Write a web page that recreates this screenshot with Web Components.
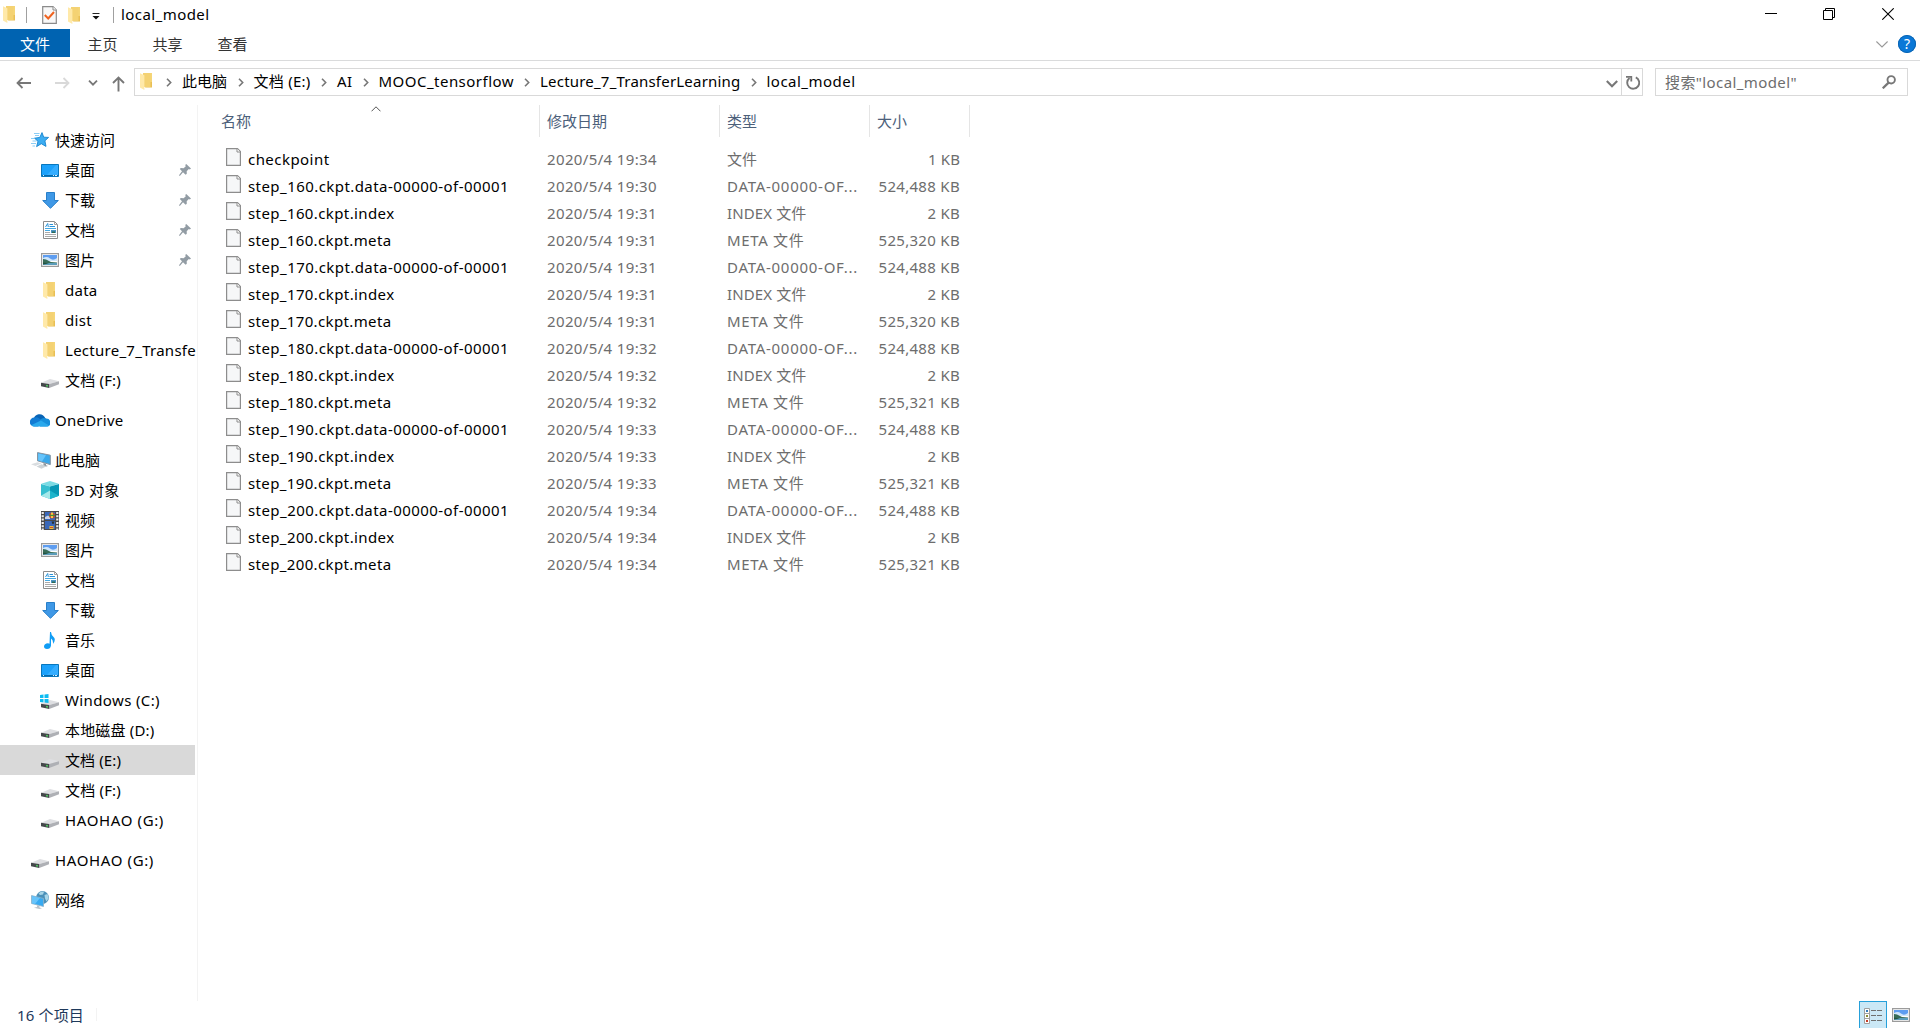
<!DOCTYPE html>
<html lang="zh-CN">
<head>
<meta charset="utf-8">
<title>local_model</title>
<style>
html,body{margin:0;height:100%;overflow:hidden;background:#fff}
body{font:15px/20px "Noto Sans","Noto Sans CJK SC",sans-serif;color:#000}
</style>
</head>
<body>
<explorer-window></explorer-window>
<script>
const DRIVE='<path d="M.2 3.800L9 0 18 2.300 8.200 5z" fill="#dedfe2"/><path d="M8.200 5L18 2.300V5.300L8.200 9z" fill="#aeb0b5"/><path d="M0 3.800L8.200 5V9L0 7.200z" fill="#45484b"/><path d="M5.200 6.600l1.600.3" stroke="#50dd64" stroke-width="1.500"/>';
const ICONS = {
folder:[12,17,'<path d="M3 0H12V12H3z" fill="#f5d678"/><path d="M8.5 9H12V14.5H5z" fill="#e9bf55"/><path d="M3 0H10.5V14H3z" fill="#f4d273"/><path d="M0 .3L4.4 2.3V17L0 14.6z" fill="#ffe9a9"/>'],
checkdoc:[15,18,'<path d="M.7 .7H11L14.3 4V17.3H.7z" fill="#f8f8f8" stroke="#8b8b8b" stroke-width="1.2"/><path d="M11 .7V4h3.3" fill="#fff" stroke="#8b8b8b"/><path d="M2.8 9l3.4 3.5L12 6" fill="none" stroke="#ef6320" stroke-width="2"/>'],
caret:[8,7,'<path d="M.5 .5H7.5" stroke="#222"/><path d="M.5 3H7.5L4 6.5z" fill="#111"/>'],
back:[15,12,'<path d="M15 6H1.5M6.5 1L1.5 6l5 5" fill="none" stroke="#777" stroke-width="1.8"/>'],
forward:[15,12,'<path d="M0 6H13.5M8.5 1l5 5-5 5" fill="none" stroke="#d9d9d9" stroke-width="1.8"/>'],
down:[10,6,'<path d="M1 .7l4 4 4-4" fill="none" stroke="#777" stroke-width="1.8"/>'],
down2:[12,8,'<path d="M.8 1l5.2 5.2L11.2 1" fill="none" stroke="#777" stroke-width="2.1"/>'],
thindown:[12,7,'<path d="M.4 .5L6 6 11.6 .5" fill="none" stroke="#999" stroke-width="1.1"/>'],
up:[13,16,'<path d="M6.5 15.5V1.5M1 7l5.500-5.500L12 7" fill="none" stroke="#777" stroke-width="1.9"/>'],
chev:[6,9,'<path d="M1 .7l3.700 3.800L1 8.300" fill="none" stroke="#777" stroke-width="1.6"/>'],
sort:[10,6,'<path d="M.5 5.300L5 .8l4.500 4.500" fill="none" stroke="#555"/>'],
refresh:[14,15,'<path d="M9.800 2.300A6 6 0 1 1 3.500 3" fill="none" stroke="#777" stroke-width="1.9"/><path d="M0 1.800H5.300V6.500" fill="none" stroke="#777" stroke-width="1.800"/>'],
search:[14,14,'<circle cx="9.200" cy="4.800" r="3.700" fill="none" stroke="#777" stroke-width="1.900"/><path d="M6.600 7.600L.7 13.300" stroke="#777" stroke-width="2.300"/>'],
min:[12,12,'<path d="M0 5.500H12" stroke="#000"/>'],
restore:[12,12,'<path d="M.5 2.500H9.500V11.500H.5zM2.500 2.500V.5H11.500V9.500H9.500" fill="none" stroke="#000"/>'],
close:[12,12,'<path d="M.3 .3L11.700 11.700M11.700 .3L.3 11.700" stroke="#000" stroke-width="1.100"/>'],
star:[18,16,'<path d="M11 .6L12.700 5.200 17.600 5.400 13.900 8.800 15 14.400 10.300 11.700 5.600 14.600 7 9.400 3.600 6.200 8.800 5.400z" fill="#3cadf2" stroke="#1583cf" stroke-width=".9"/><path d="M3 1.500H8.500M4 3.500H8M0 6.500H4M1.500 9H5.500M0 11.500H5M1.500 14H4" stroke="#6cc0f2" stroke-width=".8"/>'],
desktop:[18,13,'<path d="M.5 .5H17.500V12.500H.5z" fill="#1ba1fb" stroke="#0877bd"/><path d="M6 11L15 1h2v10z" fill="#35adff"/><path d="M1 11.500H17" stroke="#0568aa"/><path d="M2 11.500H3M12 11.500h1m1 0h2" stroke="#d8f0ff"/>'],
download:[17,17,'<path d="M4.500 .5H12.500V8.500H16.300L8.500 16.300.7 8.500H4.500z" fill="#3f98e6" stroke="#287fc9"/>'],
doc:[15,18,'<path d="M.5 .5H11.500L14.500 3.500V17.500H.5z" fill="#fff" stroke="#8c8c8c"/><path d="M11.500 1V3.500H14" fill="none" stroke="#8c8c8c" stroke-width=".8"/><path d="M2.500 6L4.700 2.500l.6 3.500M6.500 3.500H10M6.500 5.500H12" fill="none" stroke="#2b93d8"/><path d="M2 7.500H13M2 9.500H7" stroke="#2f9fe0" stroke-width=".9"/><path d="M8 9H13V12H8z" fill="#4b93c4"/><path d="M9 10.500h3v1.500H9z" fill="#2c6a54"/><path d="M2 11.500H7M2 13.500H13M2 15.500H13" stroke="#a0a0a0" stroke-width=".9"/>'],
picture:[18,14,'<path d="M.6 .6H17.400V13.400H.6z" fill="#fff" stroke="#9b9b9b" stroke-width="1.200"/><path d="M2 2H16V7H2z" fill="#5e9df0"/><path d="M2 5Q6 3 9 5.500T16 5V8H2z" fill="#cfe6fb"/><path d="M2 6L5 6.500 10 9 16 9.500V10.500H2z" fill="#376c58"/><path d="M2 10H16V12H2z" fill="#5b9dbb"/><path d="M2 9.500L8 10.500 2 11.500z" fill="#24533f"/>'],
drive:[18,9,DRIVE],
windrive:[19,15,'<g transform="translate(1 6)">'+DRIVE+'</g><path d="M0 1L3.500 .5V4H0zM4.500 .4L8.500 0V4H4.500zM0 5H3.500V8.500L0 8zM4.500 5H8.500V9L4.500 8.500z" fill="#0cbcf2"/>'],
onedrive:[20,14,'<path d="M4 5A6 6 0 0 1 14 3.200L16 6 9 9 2 6z" fill="#0864b6"/><path d="M4.500 4.600Q7 3.800 9 5.200L14.500 9 8 13.500H4A4.200 4.200 0 0 1 4.500 4.600" fill="#127bd3"/><path d="M10 7Q13 3.800 16 5.500A4.200 4.200 0 0 1 18 13.500H10z" fill="#168edb"/><path d="M1.500 12L11 7.600 19 12.500Q18 13.500 16 13.500H4Q2.500 13.500 1.500 12" fill="#29a8ec"/>'],
pc:[20,17,'<path d="M6.500 .6L19.300 3.200V12.600L6.500 8.800z" fill="#3aa8ea" stroke="#8593a0"/><path d="M7.200 1.500L15 3.200 11 9.400 7.200 8.300z" fill="#66c4fb"/><path d="M12.500 11l2.500.7v1.600l2 .7-2 .6-4.500-1.200 2-.6z" fill="#8e989f"/><path d="M0 12.300L6.500 10.300 10.500 11.600 4.500 13.900z" fill="#d9dde0"/><path d="M5.500 14.500L10.500 12.300 15.500 14.300 10.500 16.800z" fill="#cdd3d7"/>'],
cube:[18,18,'<path d="M9 0L17.800 2.800 9 5.400.2 2.800z" fill="#7adbe4"/><path d="M0 3L9 5.400V18L0 14.800z" fill="#36bfd0"/><path d="M18 3L9 5.400V18L18 14.800z" fill="#0798b5"/><path d="M9 9.500L0 14.800 9 18z" fill="#a5e8e9"/><path d="M9 9.500L18 14.800 9 18z" fill="#1db4cb"/>'],
video:[18,19,'<path d="M0 0H18V19H0z" fill="#4a4a4a"/><path d="M4 1H14V9H4zM4 10H14V18H4z" fill="#3a68b8"/><path d="M4 6l3-1.500 2 1.500v2H4z" fill="#c5d3ea"/><circle cx="11" cy="4.500" r="3" fill="#c94a38"/><path d="M10 1.500h2v5.500h-2z" fill="#f4cc3f"/><path d="M8 3.800h6v1.200H8z" fill="#3f8f3c"/><path d="M10.500 10.500h3l-1 2.500h-1z" fill="#27302f"/><path d="M8.500 15h4v3h-4z" fill="#edbf32"/><path d="M9 16h3v1H9z" fill="#c94a38"/><path d="M1.700 1V19M16.300 1V19" stroke="#efefef" stroke-width="2.200" stroke-dasharray="2 1.300"/>'],
music:[11,17,'<path d="M6 0H7Q7 3 10 5.500 12 8 9 12 9.500 8 7 6.500V13.500Q6.500 17 3 17 0 16.800 0 14.400 .3 11.500 4 11.300L5.500 11.700z" fill="#109df5"/>'],
network:[18,18,'<circle cx="11.500" cy="6.500" r="6.400" fill="#4b90b8"/><path d="M7.500 2.500Q10 0 13 .8L12 3.500 9 4zM13.500 4l3-1 1.200 4-2.200 3.500-1.500-3z" fill="#a9d6e8"/><path d="M.5 4.500L12.500 7.500V15.500L.5 12.500z" fill="#37aaf2" stroke="#8fb2c8" stroke-width=".8"/><path d="M1 5L9 7 4 13 1 12.200z" fill="#68c4fa"/><path d="M6 14.300l2.500.7v1.500l2.500.7-2.500.8-5.500-1.300 3-.6z" fill="#bbc3c9"/>'],
pin:[12,12,'<path d="M7.200 0L12 4.500 10.800 5.400 9.800 5 7.700 7.300 7.800 9.800 6.600 10.700 4 8.200 .8 12 0 11.200 3 7.200.8 5 1.800 4 4.600 4.200 6.800 2.200 6.200 1z" fill="#929ca4"/>'],
file:[15,18,'<path d="M.6 .6H11.500L14.400 3.500V17.400H.6z" fill="#f6f7f8" stroke="#8d8d8d" stroke-width="1.200"/><path d="M11 .8V4h3.200" fill="#fff" stroke="#8d8d8d"/>'],
details:[18,16,'<path d="M.5 .5H5.500V15.500H.5zM.5 5.500H5.500M.5 10.500H5.500" fill="#fff" stroke="#a1a1a1"/><path d="M2 2h2v2H2z" fill="#347abb"/><path d="M2 7h2v2H2z" fill="#8a8e35"/><path d="M2 12h2v2H2z" fill="#c63b25"/><path d="M7 2.500h5m1 0h5M7 7.500h5m1 0h5M7 12.500h5m1 0h5" stroke="#6f6f6f"/>']
};

/* Inline SVG glyph drawn at its natural pixel size. */
class GlyphIcon extends HTMLElement{
  connectedCallback(){
    if(this.shadowRoot)return;
    const [w,h,s]=ICONS[this.getAttribute('name')];
    this.attachShadow({mode:'open'}).innerHTML=`<style>:host{display:block;flex:none;width:${w}px;height:${h}px}svg{display:block}</style><svg width="${w}" height="${h}" viewBox="0 0 ${w} ${h}">${s}</svg>`;
  }
}
/* One-line label; letter spacing is set so the text fills the width in "w". */
class FitLabel extends HTMLElement{
  connectedCallback(){
    if(!this.shadowRoot)this.attachShadow({mode:'open'}).innerHTML='<style>:host{display:block;flex:none;white-space:nowrap}span{display:inline-block}</style><span><slot></slot></span>';
    const w=+this.getAttribute('w');
    if(!w)return;
    this.style.width=w+'px';
    const s=this.shadowRoot.querySelector('span');
    s.style.letterSpacing='0';
    s.style.letterSpacing=(w-s.getBoundingClientRect().width)/[...this.textContent].length+'px';
  }
}
const define=(tag,html)=>{
  const t=document.createElement('template');t.innerHTML=html;
  customElements.define(tag,class extends HTMLElement{
    connectedCallback(){if(!this.shadowRoot)this.attachShadow({mode:'open'}).append(t.content.cloneNode(true));}
  });
};
customElements.define('glyph-icon',GlyphIcon);
customElements.define('fit-label',FitLabel);

define('title-bar',`<style>
:host{display:flex;height:29px;align-items:flex-start}
i{width:1px;height:16px;background:#a0a0a0;margin-top:7px}
fit-label{margin:4px 0 0 7px}
.sp{flex:1}
</style>
<glyph-icon name="folder" style="margin:6px 11px 0 3px"></glyph-icon><i></i>
<glyph-icon name="checkdoc" style="margin:6px 11px 0 15px"></glyph-icon>
<glyph-icon name="folder" style="margin:7px 12px 0 0"></glyph-icon>
<glyph-icon name="caret" style="margin:13px 13px 0 0"></glyph-icon><i></i>
<fit-label w="88.500">local_model</fit-label><span class="sp"></span>
<glyph-icon name="min" style="margin:8px 46px 0 0"></glyph-icon>
<glyph-icon name="restore" style="margin:8px 47px 0 0"></glyph-icon>
<glyph-icon name="close" style="margin:8px 26px 0 0"></glyph-icon>`);

define('ribbon-tabs',`<style>
:host{display:flex;height:31px;border-bottom:1px solid #dadbdc;color:#333;align-items:flex-start}
b{font-weight:400;height:28px;line-height:31px;width:65px;text-align:center}
b.file{background:#0063b1;color:#fff;width:70px;line-height:30px}
.sp{flex:1}
.help{width:18px;height:18px;border-radius:50%;background:#0a78d7;color:#fff;text-align:center;line-height:18px;font-size:14px;margin:6px 4px 0 10px;box-shadow:inset 0 0 0 1px #0b65b3}
</style>
<b class="file">文件</b><b>主页</b><b>共享</b><b>查看</b><span class="sp"></span>
<glyph-icon name="thindown" style="margin-top:12px"></glyph-icon><span class="help">?</span>`);

define('address-bar',`<style>
:host{display:flex;height:44px;align-items:flex-start}
.box{box-sizing:border-box;height:28px;border:1px solid #d9d9d9;margin-top:7px;display:flex;align-items:center}
.path{width:1509px}
.search{width:253px;margin-left:12px;color:#6d6d6d}
.crumb{display:flex;align-items:center;height:26px}
.crumb glyph-icon{margin:0 10px 0 10px}
.crumb fit-label{margin-top:-2px}
.sp{flex:1}
.re{align-self:stretch;border-left:1px solid #d9d9d9;width:20px;display:flex;align-items:center;justify-content:flex-end}
</style>
<glyph-icon name="back" style="margin:16px 0 0 16px"></glyph-icon>
<glyph-icon name="forward" style="margin:16px 0 0 24px"></glyph-icon>
<glyph-icon name="down" style="margin:19px 0 0 17.500px"></glyph-icon>
<glyph-icon name="up" style="margin:15px 9.500px 0 14px"></glyph-icon>
<div class="box path">
<glyph-icon name="folder" style="margin:-2px 4px 0 5px"></glyph-icon>
<div class="crumb"><glyph-icon name="chev"></glyph-icon><fit-label w="45">此电脑</fit-label></div>
<div class="crumb"><glyph-icon name="chev" style="margin-left:10.500px"></glyph-icon><fit-label w="57">文档 (E:)</fit-label></div>
<div class="crumb"><glyph-icon name="chev" style="margin-left:10.500px"></glyph-icon><fit-label w="15.500">AI</fit-label></div>
<div class="crumb"><glyph-icon name="chev"></glyph-icon><fit-label w="135.500">MOOC_tensorflow</fit-label></div>
<div class="crumb"><glyph-icon name="chev"></glyph-icon><fit-label w="200.500">Lecture_7_TransferLearning</fit-label></div>
<div class="crumb"><glyph-icon name="chev"></glyph-icon><fit-label w="89">local_model</fit-label></div>
<span class="sp"></span><glyph-icon name="down2" style="margin:3px 3px 0 0"></glyph-icon>
<div class="re"><glyph-icon name="refresh"></glyph-icon><span style="width:2px"></span></div></div>
<div class="box search"><fit-label w="132" style="margin-left:9px">搜索"local_model"</fit-label><span class="sp"></span><glyph-icon name="search" style="margin-right:11px"></glyph-icon></div>`);

/* Navigation tree row: attributes icon, w (label width), root, pinned, active. */
customElements.define('nav-row',class extends HTMLElement{
  connectedCallback(){
    if(this.shadowRoot)return;
    const ic=this.getAttribute('icon'),root=this.hasAttribute('root');
    const low=ic==='drive'?6:ic==='windrive'?2:0;
    const shift={folder:-2,pc:1,music:-1,windrive:-1}[ic]||0;
    this.attachShadow({mode:'open'}).innerHTML=`<style>
:host{display:flex;align-items:center;height:30px;width:195px;box-sizing:border-box;padding-left:${root?29:39}px}
:host([gap]){margin-top:10px}
:host([active]){background:#d9d9d9}
.ic{flex:none;width:22px;display:flex;justify-content:center;padding-top:${low}px}
.ic glyph-icon{margin-left:${shift}px}
.t{margin-left:4px}
glyph-icon.pin{margin-left:auto;margin-right:4px}
</style><span class="ic"><glyph-icon name="${ic}"></glyph-icon></span><fit-label class="t" w="${this.getAttribute('w')}">${this.textContent}</fit-label>${this.hasAttribute('pinned')?'<glyph-icon class="pin" name="pin"></glyph-icon>':''}`;
  }
});
define('nav-pane',`<style>:host{display:block;flex:none;box-sizing:border-box;width:198px;height:896px;border-right:1px solid #f3f3f3;padding-top:20px}</style>
<nav-row root icon="star" w="60">快速访问</nav-row>
<nav-row icon="desktop" w="30" pinned>桌面</nav-row>
<nav-row icon="download" w="30" pinned>下载</nav-row>
<nav-row icon="doc" w="30" pinned>文档</nav-row>
<nav-row icon="picture" w="30" pinned>图片</nav-row>
<nav-row icon="folder" w="32.500">data</nav-row>
<nav-row icon="folder" w="27">dist</nav-row>
<nav-row icon="folder" w="131">Lecture_7_Transfe</nav-row>
<nav-row icon="drive" w="56">文档 (F:)</nav-row>
<nav-row root gap icon="onedrive" w="68.500">OneDrive</nav-row>
<nav-row root gap icon="pc" w="45">此电脑</nav-row>
<nav-row icon="cube" w="54.500">3D 对象</nav-row>
<nav-row icon="video" w="30">视频</nav-row>
<nav-row icon="picture" w="30">图片</nav-row>
<nav-row icon="doc" w="30">文档</nav-row>
<nav-row icon="download" w="30">下载</nav-row>
<nav-row icon="music" w="30">音乐</nav-row>
<nav-row icon="desktop" w="30">桌面</nav-row>
<nav-row icon="windrive" w="95">Windows (C:)</nav-row>
<nav-row icon="drive" w="89.500">本地磁盘 (D:)</nav-row>
<nav-row icon="drive" w="56" active>文档 (E:)</nav-row>
<nav-row icon="drive" w="56">文档 (F:)</nav-row>
<nav-row icon="drive" w="99">HAOHAO (G:)</nav-row>
<nav-row root gap icon="drive" w="99">HAOHAO (G:)</nav-row>
<nav-row root gap icon="network" w="30">网络</nav-row>`);

customElements.define('file-row',class extends HTMLElement{
  connectedCallback(){
    if(this.shadowRoot)return;
    const [n,nw,d,t,tw,s,sw]=this.data;
    this.attachShadow({mode:'open'}).innerHTML=`<style>
:host{display:flex;align-items:center;height:27px;color:#6d6d6d}
.n{display:flex;align-items:center;width:321px;color:#000}
glyph-icon{margin:-3px 7px 0 0}
.d{width:180px}.t{width:149px}.s{width:84px;display:flex;justify-content:flex-end}
</style><span class="n"><glyph-icon name="file"></glyph-icon><fit-label w="${nw}">${n}</fit-label></span>
<span class="d"><fit-label w="110">${d}</fit-label></span><span class="t"><fit-label w="${tw}">${t}</fit-label></span><span class="s"><fit-label w="${sw}">${s}</fit-label></span>`;
  }
});
const FILES=[['checkpoint',81.5,'2020/5/4 19:34','文件',30,'1 KB',32]];
[[160,'30','31','31','525,320'],[170,'31','31','31','525,320'],[180,'32','32','32','525,321'],[190,'33','33','33','525,321'],[200,'34','34','34','525,321']].forEach(([n,a,b,c,m])=>{
  FILES.push([`step_${n}.ckpt.data-00000-of-00001`,261,'2020/5/4 19:'+a,'DATA-00000-OF...',131,'524,488 KB',81.5],
  [`step_${n}.ckpt.index`,146.5,'2020/5/4 19:'+b,'INDEX 文件',79.5,'2 KB',32.5],
  [`step_${n}.ckpt.meta`,143.5,'2020/5/4 19:'+c,'META 文件',77.5,m+' KB',81.5]);
});
customElements.define('file-list',class extends HTMLElement{
  connectedCallback(){
    if(this.shadowRoot)return;
    const r=this.attachShadow({mode:'open'});
    r.innerHTML=`<style>
:host{display:block;flex:1}
header{display:flex;height:32px;color:#4c607a;line-height:32px;margin-bottom:8px}
header div{box-sizing:border-box;border-right:1px solid #e5e5e5;padding-left:7px}
header .a{width:342px;padding-left:23px;display:flex}
.a glyph-icon{margin:1px 0 0 120px}
.rows{padding-left:28px}
</style><header><div class="a">名称<glyph-icon name="sort"></glyph-icon></div><div style="width:180px">修改日期</div><div style="width:150px">类型</div><div style="width:100px">大小</div></header><div class="rows"></div>`;
    for(const f of FILES){const e=document.createElement('file-row');e.data=f;r.querySelector('.rows').append(e);}
  }
});
define('status-bar',`<style>
:host{display:flex;height:27px;align-items:center;color:#1e395b;padding-left:17px}
i{width:1px;height:13px;background:#f3f3f3;margin-left:12px}
.v{box-sizing:border-box;width:28px;height:28px;align-self:flex-start;border:1px solid #26a0da;background:#cbe8f6;display:flex;justify-content:center;padding-top:6px;margin-left:auto}
</style><fit-label w="67">16 个项目</fit-label><i></i><span class="v"><glyph-icon name="details"></glyph-icon></span><glyph-icon name="picture" style="margin:0 10px 0 5px"></glyph-icon>`);
define('explorer-window',`<style>:host{display:flex;flex-direction:column;height:1028px;width:1920px;overflow:hidden}main{display:flex;height:896px}</style>
<title-bar></title-bar><ribbon-tabs></ribbon-tabs><address-bar></address-bar><main><nav-pane></nav-pane><file-list></file-list></main><status-bar></status-bar>`);
</script>
</body>
</html>
